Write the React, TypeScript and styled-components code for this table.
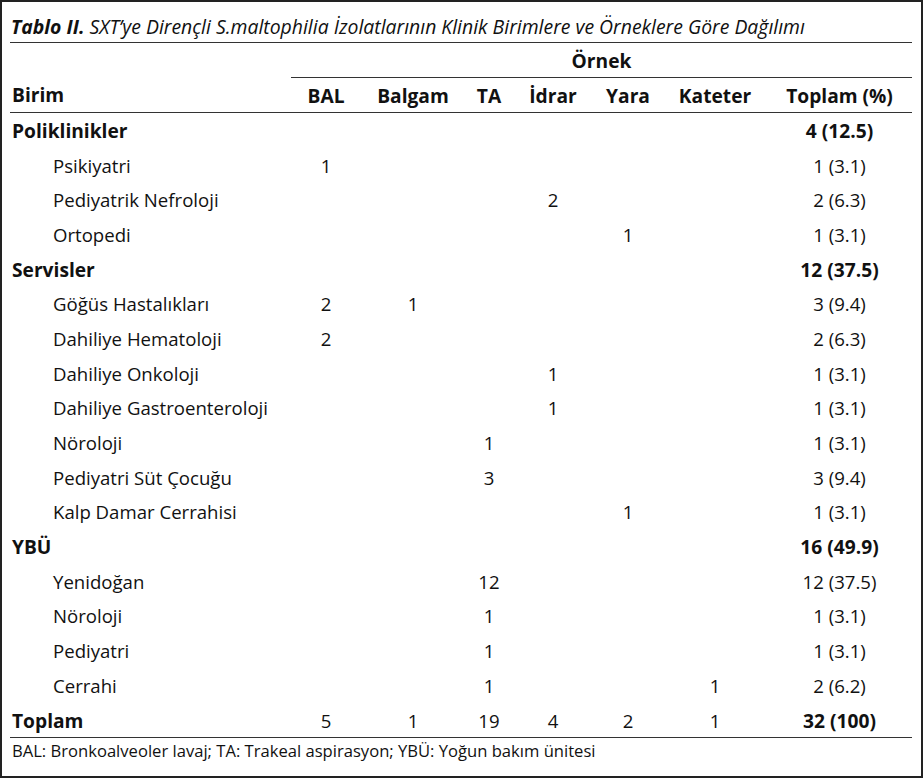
import React from "react";
import styled, { createGlobalStyle } from "styled-components";

const Global = createGlobalStyle`
  html, body { margin: 0; padding: 0; background: #fff; }
  body { font-family: "Open Sans", Lato, sans-serif; color: #111; }
`;

const Frame = styled.div`
  box-sizing: border-box;
  width: 923px;
  height: 778px;
  border: 2px solid #222;
  padding: 0 9px 0 8px;
  display: flex;
  flex-direction: column;
`;

const Title = styled.div`
  height: 41px;
  box-sizing: border-box;
  border-bottom: 1px solid #333;
  display: flex;
  align-items: center;
  padding: 9px 0 0 1px;
  font-size: 19.4px;
  font-style: italic;
  white-space: nowrap;
  b { font-weight: 700; }
`;

const Table = styled.table`
  width: 100%;
  border-collapse: collapse;
  table-layout: fixed;
  font-size: 18.6px;
`;

const Th = styled.th<{ $align?: string; $line?: boolean }>`
  font-weight: 700;
  font-size: 19.2px;
  text-align: ${(p) => p.$align || "center"};
  padding: 0 0 0 ${(p) => (p.$align === "left" ? "2px" : "0")};
  height: 34px;
  vertical-align: middle;
  border-bottom: ${(p) => (p.$line ? "1px solid #333" : "none")};
`;

const Td = styled.td<{ $bold?: boolean; $indent?: boolean; $first?: boolean }>`
  height: 34.7px;
  padding: 0;
  padding-left: ${(p) => (p.$first ? (p.$indent ? "43px" : "2px") : "0")};
  text-align: ${(p) => (p.$first ? "left" : "center")};
  font-weight: ${(p) => (p.$bold ? 700 : 400)};
  font-size: ${(p) => (p.$bold ? "19.2px" : "18.6px")};
  vertical-align: middle;
  white-space: nowrap;
`;

const HeadRow = styled.tr`
  border-bottom: 1px solid #333;
`;

const TotalRow = styled.tr`
  border-bottom: 1px solid #333;
`;

const Note = styled.div`
  flex: 1;
  display: flex;
  align-items: center;
  padding: 0 0 14px 2px;
  font-size: 16.6px;
`;

type Row = { name: string; group?: boolean; v: (string | number)[]; total: string };

const rows: Row[] = [
  { name: "Poliklinikler", group: true, v: ["", "", "", "", "", ""], total: "4 (12.5)" },
  { name: "Psikiyatri", v: [1, "", "", "", "", ""], total: "1 (3.1)" },
  { name: "Pediyatrik Nefroloji", v: ["", "", "", 2, "", ""], total: "2 (6.3)" },
  { name: "Ortopedi", v: ["", "", "", "", 1, ""], total: "1 (3.1)" },
  { name: "Servisler", group: true, v: ["", "", "", "", "", ""], total: "12 (37.5)" },
  { name: "Göğüs Hastalıkları", v: [2, 1, "", "", "", ""], total: "3 (9.4)" },
  { name: "Dahiliye Hematoloji", v: [2, "", "", "", "", ""], total: "2 (6.3)" },
  { name: "Dahiliye Onkoloji", v: ["", "", "", 1, "", ""], total: "1 (3.1)" },
  { name: "Dahiliye Gastroenteroloji", v: ["", "", "", 1, "", ""], total: "1 (3.1)" },
  { name: "Nöroloji", v: ["", "", 1, "", "", ""], total: "1 (3.1)" },
  { name: "Pediyatri Süt Çocuğu", v: ["", "", 3, "", "", ""], total: "3 (9.4)" },
  { name: "Kalp Damar Cerrahisi", v: ["", "", "", "", 1, ""], total: "1 (3.1)" },
  { name: "YBÜ", group: true, v: ["", "", "", "", "", ""], total: "16 (49.9)" },
  { name: "Yenidoğan", v: ["", "", 12, "", "", ""], total: "12 (37.5)" },
  { name: "Nöroloji", v: ["", "", 1, "", "", ""], total: "1 (3.1)" },
  { name: "Pediyatri", v: ["", "", 1, "", "", ""], total: "1 (3.1)" },
  { name: "Cerrahi", v: ["", "", 1, "", "", 1], total: "2 (6.2)" },
];

const cols = ["BAL", "Balgam", "TA", "İdrar", "Yara", "Kateter"];
const widths = [281, 70, 104, 48, 80, 70, 104, 145];

export default function App() {
  return (
    <>
      <Global />
      <Frame>
        <Title>
          <span>
            <b>Tablo II.</b> SXT’ye Dirençli S.maltophilia İzolatlarının Klinik Birimlere ve Örneklere Göre Dağılımı
          </span>
        </Title>
        <Table>
          <colgroup>
            {widths.map((w, i) => (
              <col key={i} style={{ width: w }} />
            ))}
          </colgroup>
          <thead>
            <tr>
              <Th />
              <Th colSpan={7} $line>
                Örnek
              </Th>
            </tr>
            <HeadRow>
              <Th $align="left">Birim</Th>
              {cols.map((c) => (
                <Th key={c}>{c}</Th>
              ))}
              <Th>Toplam (%)</Th>
            </HeadRow>
          </thead>
          <tbody>
            {rows.map((r, i) => (
              <tr key={i}>
                <Td $first $bold={r.group} $indent={!r.group}>
                  {r.name}
                </Td>
                {r.v.map((x, j) => (
                  <Td key={j}>{x}</Td>
                ))}
                <Td $bold={r.group}>{r.total}</Td>
              </tr>
            ))}
            <TotalRow>
              <Td $first $bold>
                Toplam
              </Td>
              {[5, 1, 19, 4, 2, 1].map((x, j) => (
                <Td key={j}>{x}</Td>
              ))}
              <Td $bold>32 (100)</Td>
            </TotalRow>
          </tbody>
        </Table>
        <Note>BAL: Bronkoalveoler lavaj; TA: Trakeal aspirasyon; YBÜ: Yoğun bakım ünitesi</Note>
      </Frame>
    </>
  );
}
